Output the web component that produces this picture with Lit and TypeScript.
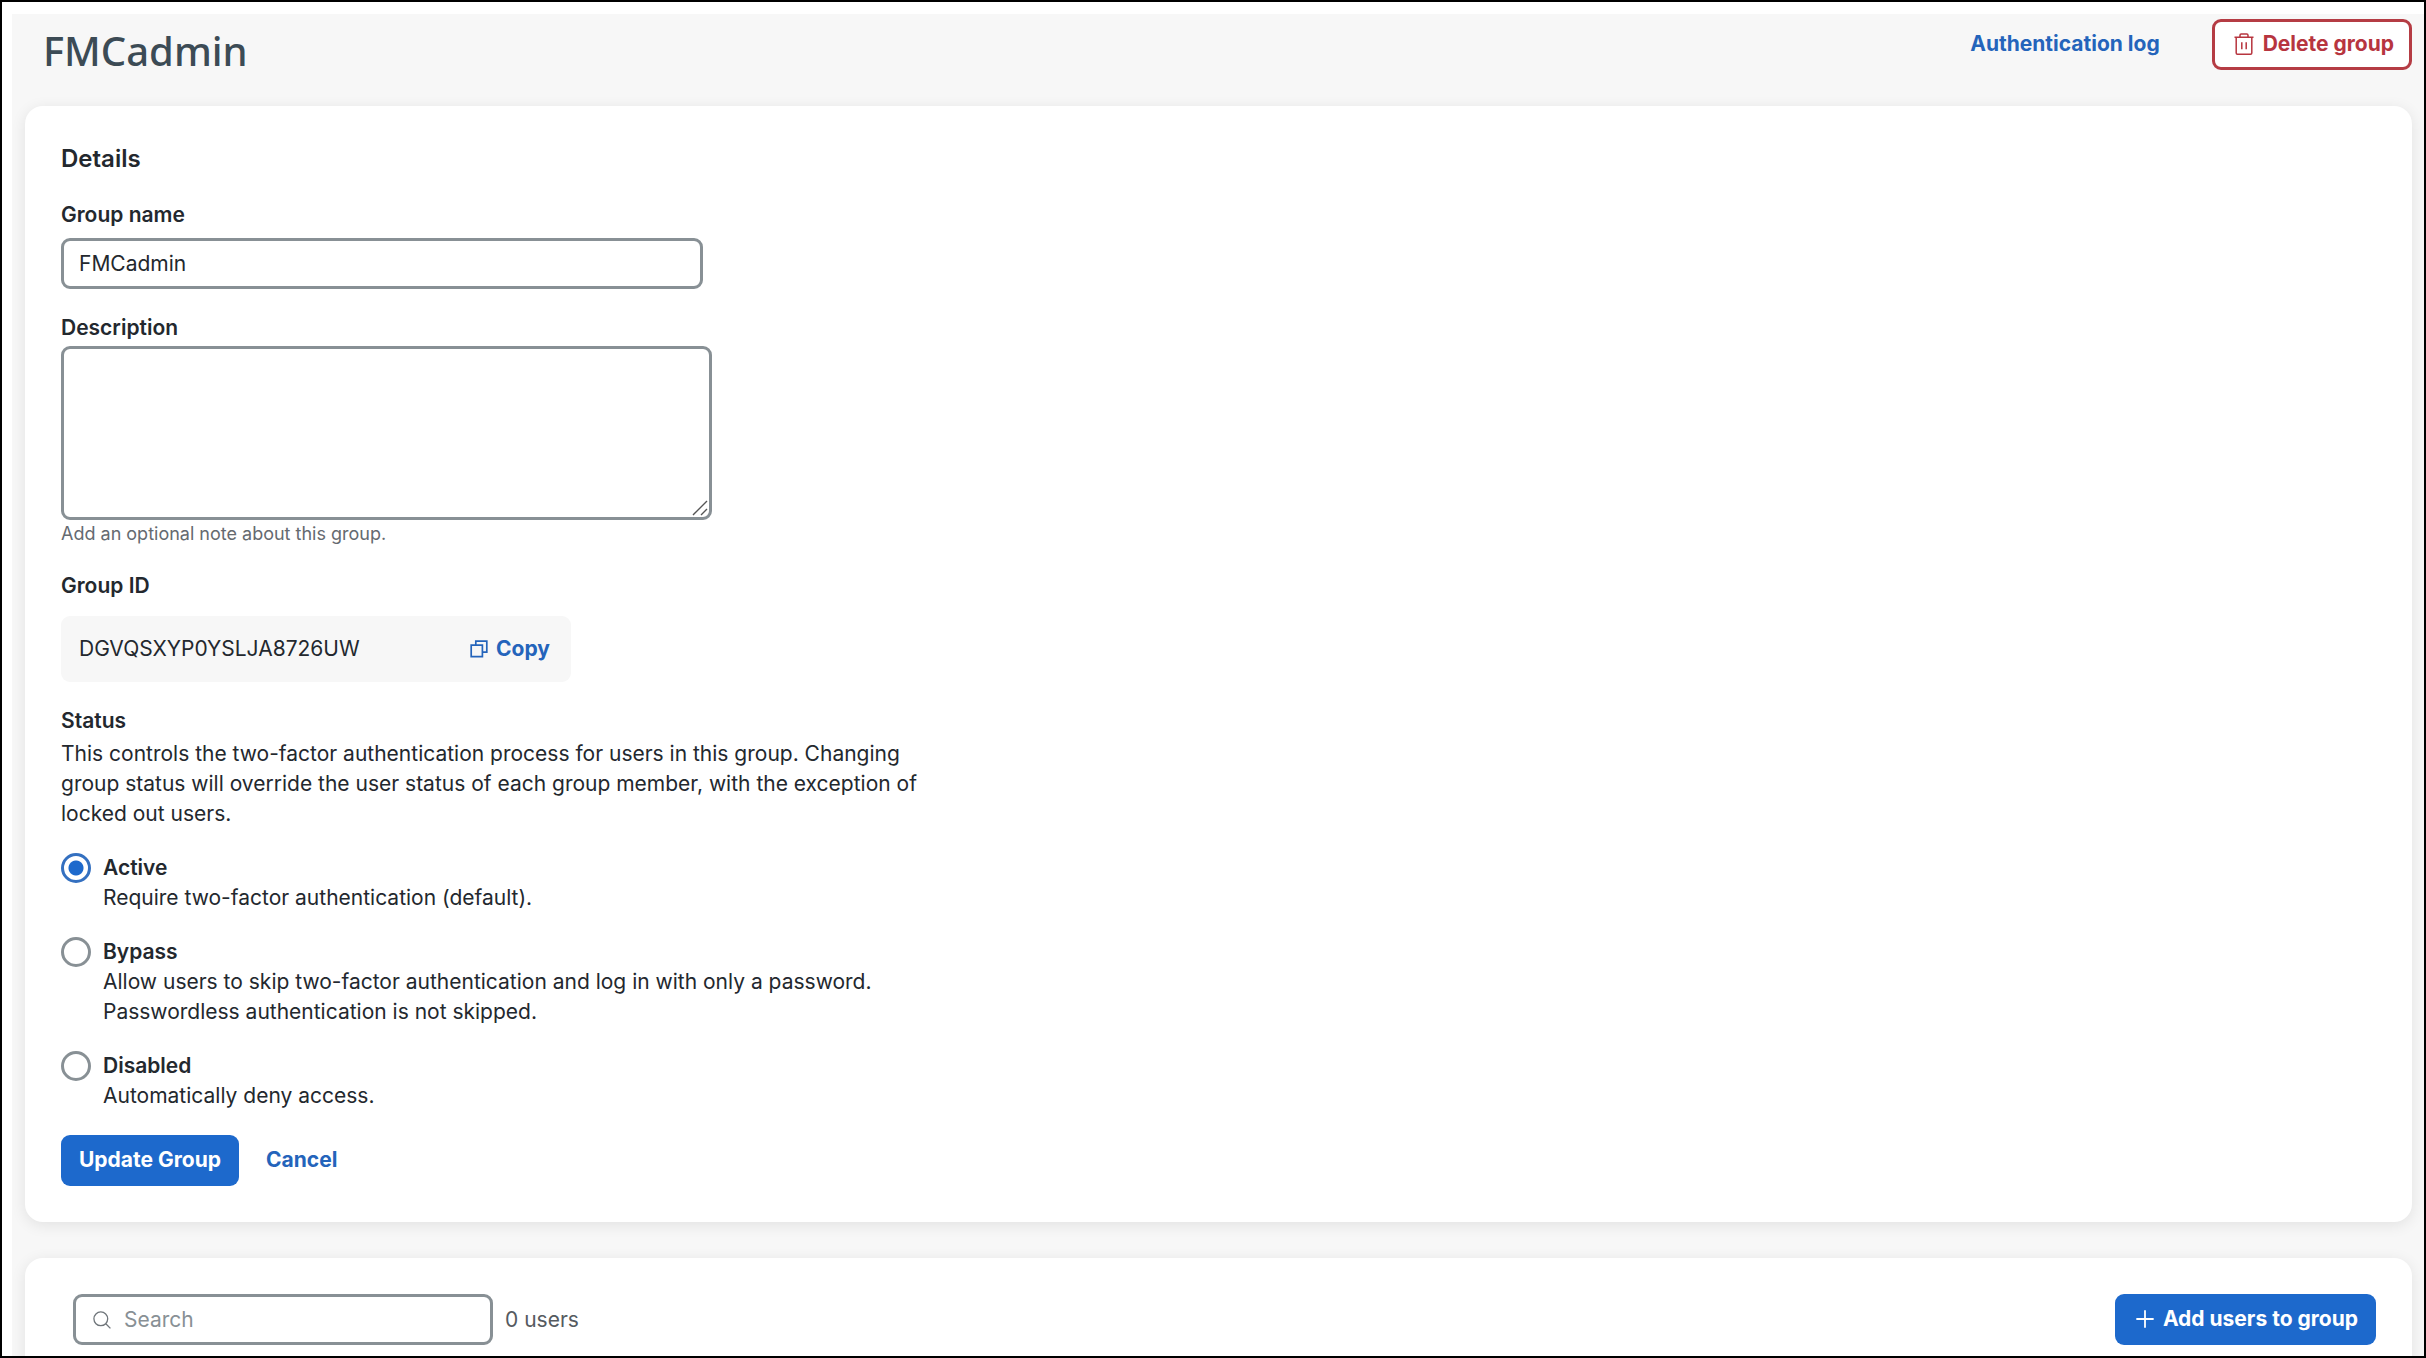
import { LitElement, html, css } from "lit";
import { customElement, state } from "lit/decorators.js";

interface StatusOption {
  value: string;
  label: string;
  lines: string;
}

const STATUS_OPTIONS: StatusOption[] = [
  { value: "active", label: "Active", lines: "Require two-factor authentication (default)." },
  {
    value: "bypass",
    label: "Bypass",
    lines:
      "Allow users to skip two-factor authentication and log in with only a password. Passwordless authentication is not skipped.",
  },
  { value: "disabled", label: "Disabled", lines: "Automatically deny access." },
];

const trashIcon = html`<svg class="icon" width="20" height="22" viewBox="0 0 20 22" fill="none" stroke="currentColor" stroke-width="1.5" aria-hidden="true">
  <path d="M0.5 4.2H19.5M6 4V2.2Q6 1 7.2 1H12.8Q14 1 14 2.2V4M2.2 4.5V20Q2.2 21.2 3.4 21.2H16.6Q17.8 21.2 17.8 20V4.5M7.8 9.3V16.2M12.2 9.3V16.2" />
</svg>`;

const copyIcon = html`<svg class="icon" width="18" height="18" viewBox="0 0 18 18" fill="none" stroke="currentColor" stroke-width="1.7" aria-hidden="true">
  <path d="M5.8 5V1.2H16.8V12.2H12.8M1.2 5.2H12.4V16.6H1.2Z" />
</svg>`;

const searchIcon = html`<svg class="search-icon" width="18" height="18" viewBox="0 0 18 18" fill="none" stroke="currentColor" stroke-width="1.3" aria-hidden="true">
  <circle cx="7.8" cy="7.8" r="6.9" />
  <path d="M12.8 12.8L17.4 17.4" />
</svg>`;

const plusIcon = html`<svg class="icon" width="18" height="18" viewBox="0 0 18 18" fill="none" stroke="currentColor" stroke-width="1.8" stroke-linecap="round" aria-hidden="true">
  <path d="M9 1V17M1 9H17" />
</svg>`;

@customElement("app-root")
export class AppRoot extends LitElement {
  @state() private status = "active";

  static styles = css`
    :host {
      display: block;
      font-family: Inter, "Liberation Sans", sans-serif;
      font-size: 21px;
      line-height: 30px;
      color: #23282e;
    }
    *, *::before, *::after { box-sizing: border-box; }
    h1, h2, p, fieldset, legend { margin: 0; padding: 0; border: 0; }
    button, input, textarea { font: inherit; color: inherit; margin: 0; }
    a { color: #2464bb; text-decoration: none; font-weight: 700; }

    .frame {
      height: 100vh;
      padding: 12px 0 0 10px;
      border: 2px solid #000;
      background: #fff;
      overflow: hidden;
    }
    .page {
      display: flex;
      flex-direction: column;
      height: 100%;
      padding: 0 12px 0 13px;
      background: #f7f7f7;
    }
    .header {
      display: flex;
      flex: none;
      justify-content: space-between;
      align-items: flex-start;
      height: 92px;
      padding: 5px 0 0 18px;
    }
    .title {
      font-family: "Noto Sans", "Open Sans", sans-serif;
      font-size: 40px;
      line-height: 64px;
      font-weight: 500;
      color: #3c4b55;
    }
    .actions { display: flex; align-items: center; gap: 52px; }

    .button {
      display: inline-flex;
      align-items: center;
      justify-content: center;
      gap: 9px;
      height: 51px;
      padding: 0 18px 2px;
      border: 0;
      border-radius: 9px;
      font-weight: 700;
      background: #1d69cc;
      color: #fff;
      white-space: nowrap;
    }
    .button.with-icon { padding-left: 21px; }
    .button.danger {
      padding: 0 15px 2px 19px;
      border: 3px solid #b53c44;
      background: #fff;
      color: #b7353f;
    }
    .icon { flex: none; }

    .card {
      flex: none;
      padding: 36px;
      border-radius: 18px;
      background: #fff;
      box-shadow: 0 3px 15px rgba(0, 0, 0, 0.09);
    }
    .details { margin-bottom: 36px; }
    .users {
      display: flex;
      flex: 1;
      align-items: flex-start;
      justify-content: space-between;
      padding-left: 48px;
      border-radius: 18px 18px 0 0;
    }
    .form { display: flex; flex-direction: column; align-items: flex-start; gap: 24px; }
    .heading { font-size: 24px; line-height: 34px; font-weight: 600; }
    .field { display: flex; flex-direction: column; width: 100%; }
    .label { font-weight: 600; }

    .input {
      width: 100%;
      max-width: 642px;
      height: 51px;
      margin-top: 8px;
      padding: 0 15px;
      border: 3px solid #889095;
      border-radius: 9px;
      background: #fff;
    }
    .input:focus-visible, .textarea:focus-visible { outline: 3px solid #8fb6ea; }
    .area { position: relative; width: 100%; max-width: 651px; margin-top: 3px; }
    .textarea {
      display: block;
      width: 100%;
      height: 174px;
      padding: 9px 15px;
      border: 3px solid #889095;
      border-radius: 9px;
      background: #fff;
      resize: vertical;
    }
    .textarea::-webkit-resizer { display: none; }
    .grip { position: absolute; right: 4px; bottom: 4px; pointer-events: none; color: #555; }
    .help { font-size: 18px; line-height: 27px; color: #656a70; }

    .group-id {
      display: flex;
      align-items: center;
      justify-content: space-between;
      width: 100%;
      max-width: 510px;
      height: 66px;
      margin-top: 15px;
      padding: 0 21px 0 18px;
      border-radius: 9px;
      background: #f7f7f7;
    }
    .copy {
      display: inline-flex;
      align-items: center;
      gap: 8px;
      padding: 0;
      border: 0;
      background: none;
      color: #2464bb;
      font-weight: 700;
    }

    .status { display: flex; flex-direction: column; gap: 24px; width: 100%; max-width: 864px; min-width: 0; }
    .status-note { margin-top: 3px; }
    .option { display: grid; grid-template-columns: 30px 1fr; column-gap: 12px; }
    .radio {
      appearance: none;
      width: 30px;
      height: 30px;
      border: 3px solid #889095;
      border-radius: 50%;
      background: #fff;
    }
    .radio:checked {
      border-color: #3470c0;
      background: radial-gradient(circle, #1d69cc 7px, #fff 8px);
    }
    .option-text { grid-column: 2; }
    .form-actions { display: flex; align-items: center; gap: 27px; }
    .form-actions a, .actions a { padding-bottom: 2px; }

    .filter { display: flex; align-items: center; gap: 12px; color: #555a60; }
    .search { position: relative; width: 420px; }
    .search-input { margin: 0; padding-left: 48px; display: block; }
    .search-input::placeholder { color: #889095; opacity: 1; }
    .search-icon { position: absolute; left: 20px; top: 17px; color: #6f757a; }
  `;

  private renderOption(option: StatusOption) {
    return html`<div class="option">
      <input
        class="radio"
        type="radio"
        name="status"
        id="status-${option.value}"
        aria-describedby="status-${option.value}-text"
        .checked=${this.status === option.value}
        @change=${() => (this.status = option.value)}
      />
      <label class="label" for="status-${option.value}">${option.label}</label>
      <p class="option-text" id="status-${option.value}-text">${option.lines}</p>
    </div>`;
  }

  render() {
    return html`<div class="frame">
      <main class="page">
        <header class="header">
          <h1 class="title">FMCadmin</h1>
          <div class="actions">
            <a href="#log">Authentication log</a>
            <button class="button danger" type="button">${trashIcon}Delete group</button>
          </div>
        </header>

        <section class="card details">
          <form class="form" @submit=${(e: Event) => e.preventDefault()}>
            <h2 class="heading">Details</h2>
            <div class="field">
              <label class="label" for="group-name">Group name</label>
              <input class="input" id="group-name" type="text" value="FMCadmin" />
            </div>
            <div class="field">
              <label class="label" for="description">Description</label>
              <div class="area">
                <textarea class="textarea" id="description" aria-describedby="description-help"></textarea>
                <svg class="grip" width="16" height="16" viewBox="0 0 16 16" stroke="currentColor" stroke-width="1.4" aria-hidden="true">
                  <path d="M1 15L15 1M9 15L15 9" />
                </svg>
              </div>
              <p class="help" id="description-help">Add an optional note about this group.</p>
            </div>
            <div class="field">
              <span class="label">Group ID</span>
              <div class="group-id">
                <span>DGVQSXYP0YSLJA8726UW</span>
                <button class="copy" type="button">${copyIcon}Copy</button>
              </div>
            </div>
            <fieldset class="status">
              <div>
                <legend class="label">Status</legend>
                <p class="status-note">
                  This controls the two-factor authentication process for users in this group. Changing group status
                  will override the user status of each group member, with the exception of locked out users.
                </p>
              </div>
              ${STATUS_OPTIONS.map((option) => this.renderOption(option))}
            </fieldset>
            <div class="form-actions">
              <button class="button" type="submit">Update Group</button>
              <a href="#cancel">Cancel</a>
            </div>
          </form>
        </section>

        <section class="card users">
          <div class="filter">
            <div class="search">
              ${searchIcon}
              <input class="input search-input" type="search" placeholder="Search" aria-label="Search users" />
            </div>
            <span>0 users</span>
          </div>
          <button class="button with-icon" type="button">${plusIcon}Add users to group</button>
        </section>
      </main>
    </div>`;
  }
}
